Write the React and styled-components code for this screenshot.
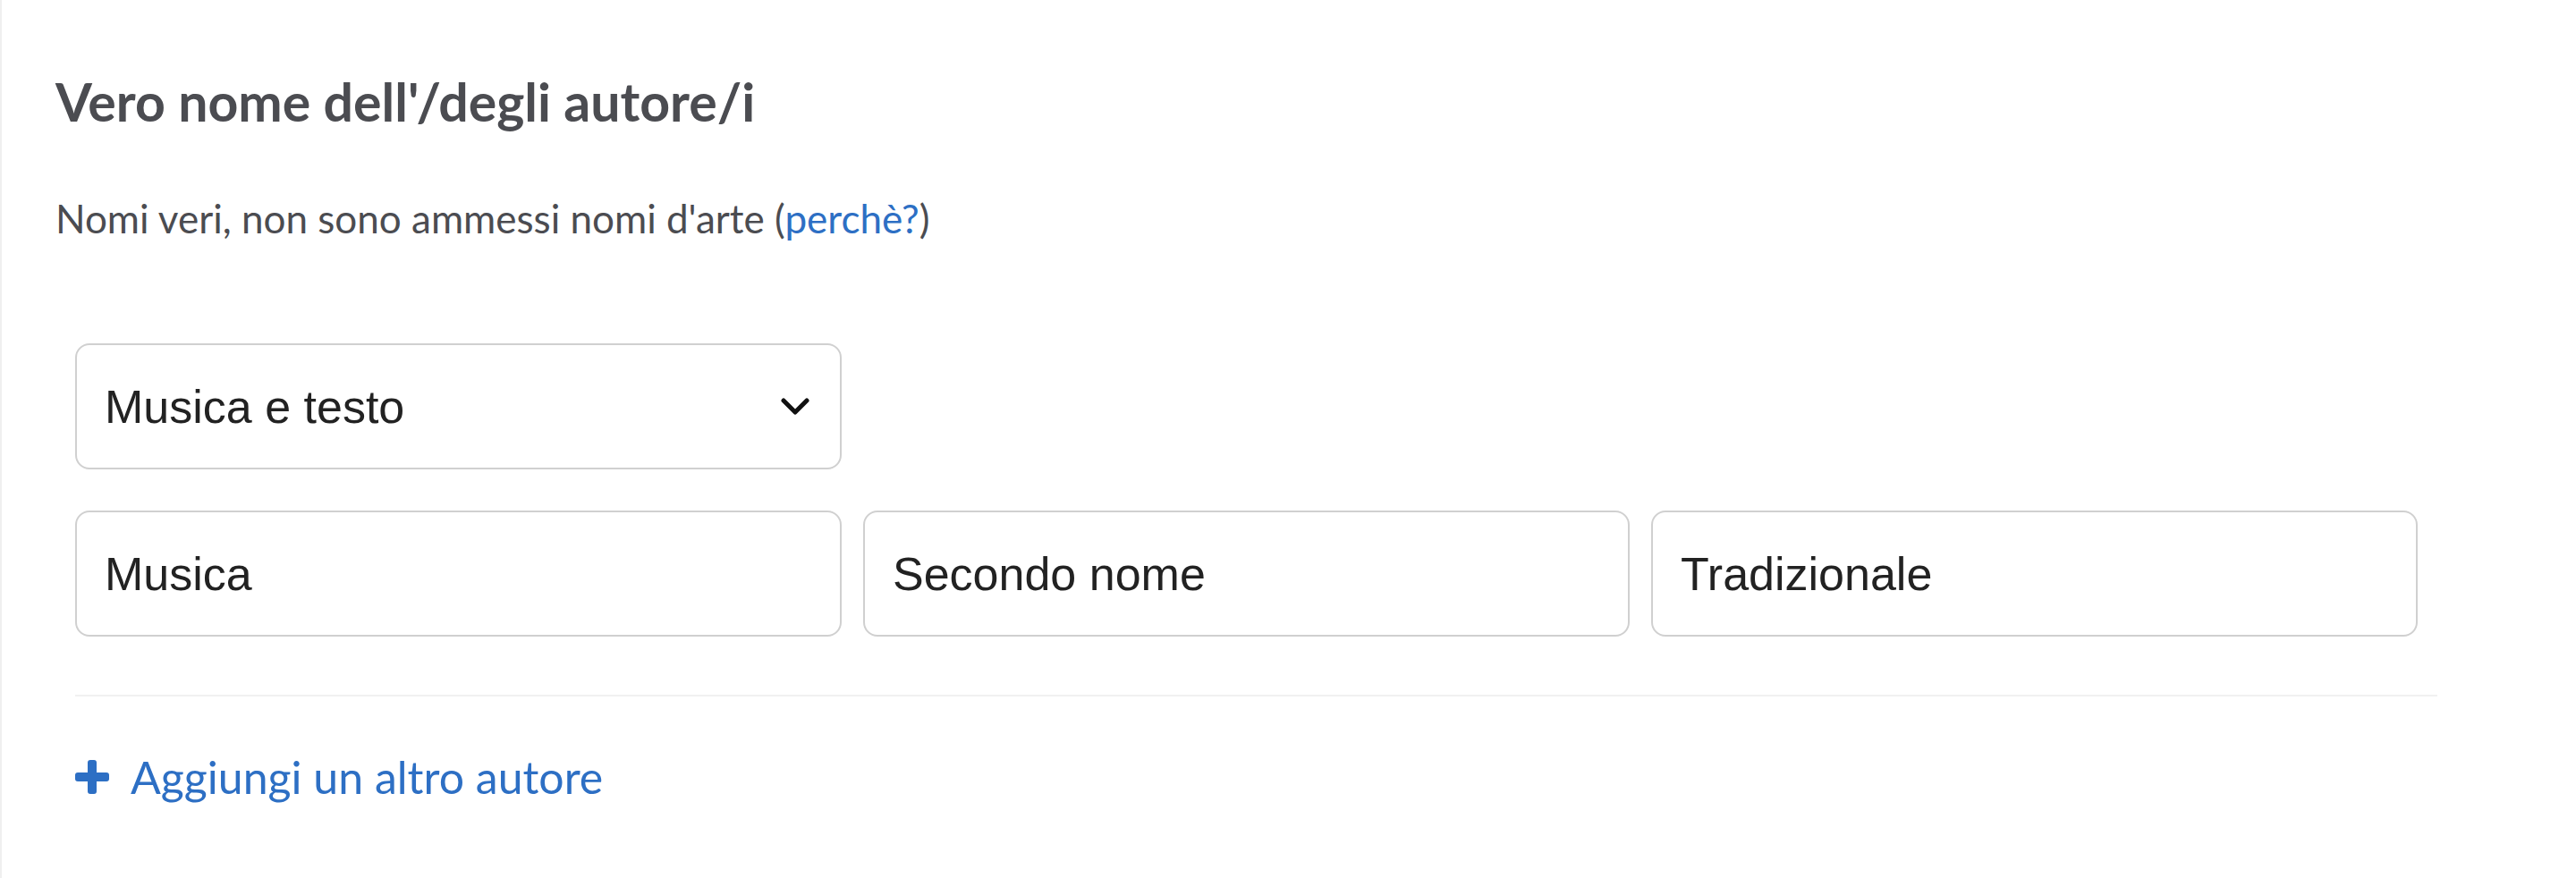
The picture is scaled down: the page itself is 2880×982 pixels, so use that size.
import React from 'react';
import styled, { createGlobalStyle } from 'styled-components';

const GlobalStyle = createGlobalStyle`
  html, body {
    margin: 0;
    padding: 0;
    background: #ffffff;
  }
  * {
    box-sizing: border-box;
  }
`;

const Page = styled.section`
  min-height: 982px;
  border-left: 2px solid #efefef;
  padding: 78px 0 0 60px;
  font-family: Lato, 'Noto Sans', sans-serif;
`;

const Title = styled.h2`
  margin: 0;
  font-size: 59px;
  line-height: 72px;
  font-weight: 700;
  color: #4b4c51;
`;

const Hint = styled.p`
  margin: 67px 0 0;
  font-size: 44px;
  line-height: 54px;
  font-weight: 400;
  color: #4b4c51;
`;

const Link = styled.a`
  color: #2d6fc4;
  text-decoration: none;
  cursor: pointer;
`;

const Form = styled.div`
  width: 2641px;
  margin: 113px 0 0 22px;
`;

const FieldGrid = styled.div`
  display: grid;
  grid-template-columns: repeat(3, 857px);
  column-gap: 24px;
  margin-top: ${(p) => p.$top || 0}px;
`;

const SelectWrap = styled.div`
  position: relative;
`;

const fieldBase = `
  width: 100%;
  height: 141px;
  border: 2px solid #d0d0d0;
  border-radius: 16px;
  background: #ffffff;
  padding: 0 31px;
  font-family: 'Liberation Sans', Arial, sans-serif;
  font-size: 52px;
  color: #222222;
  outline: none;
`;

const Select = styled.select`
  ${fieldBase}
  appearance: none;
  -webkit-appearance: none;
  cursor: pointer;
`;

const Chevron = styled.svg`
  position: absolute;
  right: 36px;
  top: 50%;
  width: 32px;
  height: 20px;
  transform: translateY(-50%);
  pointer-events: none;
`;

const Input = styled.input`
  ${fieldBase}
`;

const Divider = styled.hr`
  margin: 65px 0 0;
  border: none;
  height: 2px;
  background: #f1f1f1;
`;

const AddButton = styled.button`
  display: flex;
  align-items: center;
  gap: 24px;
  margin-top: 59px;
  padding: 0;
  border: none;
  background: none;
  color: #2d6fc4;
  font-family: Lato, 'Noto Sans', sans-serif;
  font-size: 50px;
  line-height: 62px;
  cursor: pointer;
`;

const PlusIcon = () => (
  <svg width="38" height="38" viewBox="0 0 38 38" fill="#2d6fc4">
    <rect x="0" y="14" width="38" height="10" rx="3" />
    <rect x="14" y="0" width="10" height="38" rx="3" />
  </svg>
);

const App = () => {
  return (
    <>
      <GlobalStyle />
      <Page>
        <Title>Vero nome dell'/degli autore/i</Title>
        <Hint>
          Nomi veri, non sono ammessi nomi d'arte (<Link>perchè?</Link>)
        </Hint>

        <Form>
          <FieldGrid>
            <SelectWrap>
              <Select defaultValue="musica-testo">
                <option value="musica-testo">Musica e testo</option>
                <option value="musica">Musica</option>
                <option value="testo">Testo</option>
              </Select>
              <Chevron viewBox="0 0 32 20" fill="none">
                <path
                  d="M3 3l13 13L29 3"
                  stroke="#111"
                  strokeWidth="5"
                  strokeLinecap="round"
                  strokeLinejoin="round"
                />
              </Chevron>
            </SelectWrap>
          </FieldGrid>

          <FieldGrid $top={46}>
            <Input defaultValue="Musica" />
            <Input defaultValue="Secondo nome" />
            <Input defaultValue="Tradizionale" />
          </FieldGrid>

          <Divider />

          <AddButton type="button">
            <PlusIcon />
            Aggiungi un altro autore
          </AddButton>
        </Form>
      </Page>
    </>
  );
};

export default App;
